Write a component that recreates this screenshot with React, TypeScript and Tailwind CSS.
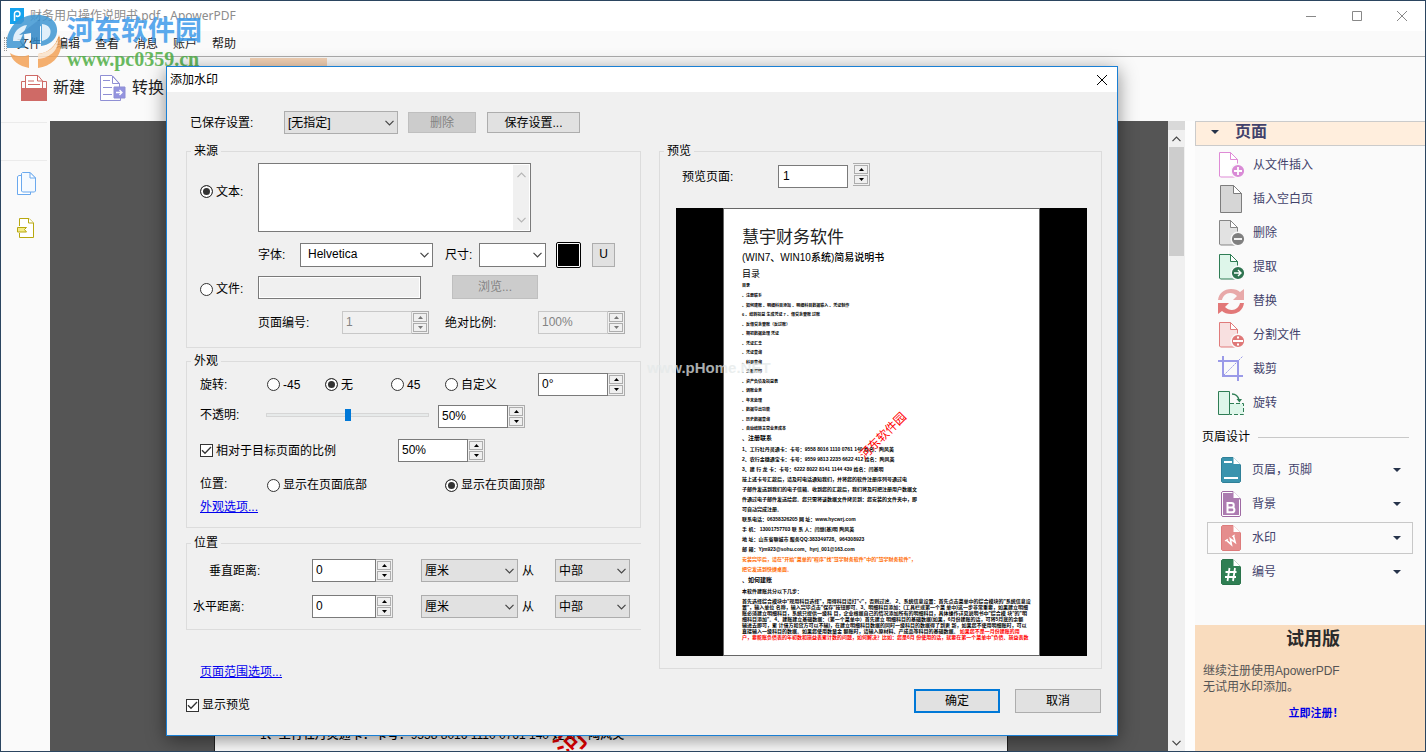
import { useState } from "react";
import type { ReactNode } from "react";

const menuItems = ["文件", "编辑", "查看", "消息", "账户", "帮助"];

const contents = [
    "、注册联系",
    "、如何建账 、明细科目添加 、明细科目数据输入 、凭证制作",
    "6 、结转损益 生成凭证 7 、借贷余登账 过账",
    "、反借贷余登账（反过账）",
    "、期初数据处理 凭证",
    "、凭证汇总",
    "、凭证查询",
    "、科目查询",
    "、总账打印",
    "、资产负债及损益表",
    "、调账业务",
    "、年末处理",
    "、数据导出功能",
    "、历史数据查询",
    "、自动结转主营业务成本",
];

const accountLine = "1、工行牡丹灵通卡：卡号：9558 8016 1110 0761 140 姓名：陶风英";

const registerLines = [
    accountLine,
    "2、农行金穗通宝卡：卡号：9559 9813 2235 6622 412 姓名：陶风英",
    "3、建 行 龙 卡：卡号：6222 8022 8141 1144 439 姓名：闫基明",
    "按上述卡号汇款后，请及时电话通知我们，并将您的软件注册序列号通过电",
    "子邮件发送到我们的电子信箱。收到您的汇款后，我们将及时把注册用户数据文",
    "件通过电子邮件发送给您。您只需将该数据文件拷贝到：您安装的文件夹中，即",
    "可自动完成注册。",
    "联系电话：06358326205 网 址：www.hycwrj.com",
    "手 机： 13001757703 联 系 人：闫继(基)明 陶风英",
    "地 址：山东省聊城市 服务QQ:383349728、964308923",
    "邮 箱：Yjm923@sohu.com、hyrj_001@163.com",
];

const stepLines = [
    '首先选择综合模块中"现用科目选择"，用得科目请打"√"，否则过滤。 2、系统信息设置：首先点击菜单中的综合模块的"系统信息设',
    '置"，输入单位 名称，输入完毕点击"保存"按钮即可。3、明细科目添加：(工具栏或第一个菜 单中)这一步非常重要，如果建立明细',
    '账必须建立明细科目，系统只提供一级科 目，企业根据自己的情况添加所有的明细科目，具体操作详见说明书中"综合模 块"的"明',
    '细科目添加"。4、建账建立基础数据：（第一个菜单中）首先建立 明细科目的基础数据(如果，6月份建账的话，可将5月底的余额',
    "输进去即可，累 计借方和贷方可以不输)，在建立明细科目数据的同时一级科目的数据得了到更 新，如果您不使用明细账时，可以",
];

function Chevron({ className = "" }: { className?: string }) {
    return (
        <svg viewBox="0 0 9 6" className={`h-1.5 w-[9px] ${className}`} fill="none" stroke="currentColor">
            <path d="M.5.8l4 4 4-4" strokeWidth="1.2" />
        </svg>
    );
}

function Triangle({ up = false }: { up?: boolean }) {
    return (
        <svg viewBox="0 0 5 3" className="h-[3px] w-[5px]" fill="currentColor">
            <path d={up ? "M0 3h5L2.5 0z" : "M0 0h5L2.5 3z"} />
        </svg>
    );
}

function Select({ id, options, className, white = false, label }: { id: string; options: string[]; className: string; white?: boolean; label?: string }) {
    return (
        <span className={`grid items-center ${className}`}>
            <select
                id={id}
                aria-label={label}
                className={`h-full w-full appearance-none border text-black [grid-area:1/1] ${white ? "border-[#7a7a7a] bg-white pb-0.5 pl-[7px]" : "border-[#adadad] bg-[#e1e1e1] pl-[3px]"}`}
            >
                {options.map((option) => <option key={option}>{option}</option>)}
            </select>
            <Chevron className="pointer-events-none mr-1 justify-self-end text-[#444] [grid-area:1/1]" />
        </span>
    );
}

function Arrows({ disabled = false, name }: { disabled?: boolean; name: string }) {
    const button = "flex flex-1 items-center justify-center border border-[#adadad] bg-[#f0f0f0]";
    return (
        <span className={`flex h-[23px] w-[17px] flex-col gap-px border-y border-r border-[#adadad] bg-[#f0f0f0] p-px ${disabled ? "text-[#777]" : "text-black"}`}>
            <button type="button" disabled={disabled} aria-label={`${name}增加`} className={button}><Triangle up /></button>
            <button type="button" disabled={disabled} aria-label={`${name}减少`} className={button}><Triangle /></button>
        </span>
    );
}

function Spin({ id, value, name, className = "w-[87px]", disabled = false }: { id: string; value: string; name: string; className?: string; disabled?: boolean }) {
    return (
        <span className={`flex h-[23px] ${className}`}>
            <input
                id={id}
                type="text"
                aria-label={name}
                defaultValue={value}
                disabled={disabled}
                className={`h-full min-w-0 flex-1 border pb-0.5 pl-[3px] ${disabled ? "border-[#c8c8c8] bg-[#f0f0f0] text-[#838383]" : "border-[#7a7a7a] bg-white text-black"}`}
            />
            <Arrows disabled={disabled} name={name} />
        </span>
    );
}

function Radio({ name, label, checked = false, className = "" }: { name: string; label: string; checked?: boolean; className?: string }) {
    return (
        <label className={`flex items-center gap-[3px] ${className}`}>
            <input
                type="radio"
                name={name}
                defaultChecked={checked}
                className="size-[13px] shrink-0 appearance-none rounded-full border border-[#333] bg-white checked:bg-[#333] checked:shadow-[inset_0_0_0_2px_#fff]"
            />
            {label}
        </label>
    );
}

function Check({ label, checked, onChange, className = "" }: { label: string; checked: boolean; onChange: (v: boolean) => void; className?: string }) {
    return (
        <label className={`flex items-center gap-[3px] ${className}`}>
            <span className="grid place-items-center">
                <input
                    type="checkbox"
                    checked={checked}
                    onChange={(e) => onChange(e.target.checked)}
                    className="size-[13px] appearance-none border border-[#333] bg-white [grid-area:1/1]"
                />
                {checked && (
                    <svg viewBox="0 0 11 11" className="pointer-events-none size-[11px] [grid-area:1/1]" fill="none" stroke="#333" strokeWidth="1.3">
                        <path d="M1 5.2l3 3L10 2" />
                    </svg>
                )}
            </span>
            {label}
        </label>
    );
}

function Group({ title, className, bodyClass, children }: { title: string; className: string; bodyClass: string; children: ReactNode }) {
    return (
        <fieldset className={`min-w-0 border border-[#dcdcdc] ${className}`}>
            <legend className="ml-1 px-[3px] leading-4">{title}</legend>
            <div className={bodyClass}>{children}</div>
        </fieldset>
    );
}

/* page outline shared by the panel icons */
function Sheet({ stroke, fill, children }: { stroke: string; fill: string; children?: ReactNode }) {
    return (
        <svg viewBox="0 0 28 28" className="size-7" fill="none">
            <path d="M2.5 1.5h11l7 7v17.5h-17l-1-1z" fill={fill} stroke={stroke} />
            <path d="M13.5 1.5v7h7z" fill="#fff" stroke={stroke} />
            {children}
        </svg>
    );
}

function Badge({ color, children }: { color: string; children: ReactNode }) {
    return (
        <>
            <circle cx="21" cy="20" r="6.8" fill={color} stroke="#fafafa" strokeWidth="1.4" />
            <g stroke="#fff" strokeWidth="1.8">{children}</g>
        </>
    );
}

const pageActions: { label: string; icon: ReactNode }[] = [
    {
        label: "从文件插入",
        icon: <Sheet stroke="#df8bd6" fill="#fff"><Badge color="#d98bd6"><path d="M17 20h8M21 16v8" /></Badge></Sheet>,
    },
    {
        label: "插入空白页",
        icon: (
            <svg viewBox="0 0 28 28" className="size-7" fill="none" stroke="#7d7d7d">
                <path d="M3.5.5h13l8 8V27.5h-21z" fill="#d6d6d6" />
                <path d="M16.5.5v8h8z" fill="#fff" />
            </svg>
        ),
    },
    {
        label: "删除",
        icon: <Sheet stroke="#858585" fill="#e2e2e2"><Badge color="#808080"><path d="M17 20h8" /></Badge></Sheet>,
    },
    {
        label: "提取",
        icon: (
            <Sheet stroke="#2f7d55" fill="#def6ea">
                <Badge color="#2f7450"><path d="M17 20h7M21 17l3 3-3 3" strokeWidth="1.4" /></Badge>
            </Sheet>
        ),
    },
    {
        label: "替换",
        icon: (
            <svg viewBox="0 0 28 28" className="size-7">
                <path d="M1 13C2 6 7 2 14 2c4 0 7 1 9 3l4-3v11H16l4-4c-2-2-4-3-7-3-4 0-7 3-8 7z" fill="#e8a9a9" />
                <path d="M27 16c-1 7-6 11-13 11-4 0-7-1-9-3l-4 3V16h11l-4 4c2 2 4 3 7 3 4 0 7-3 8-7z" fill="#e27878" />
            </svg>
        ),
    },
    {
        label: "分割文件",
        icon: (
            <Sheet stroke="#e07b7b" fill="#f8e0e0">
                <Badge color="#df7777"><path d="M16 20h10M20 16.500h2M20 23.500h2" /></Badge>
            </Sheet>
        ),
    },
    {
        label: "裁剪",
        icon: (
            <svg viewBox="0 0 28 28" className="size-7" fill="none" stroke="#9a9ae8">
                <path d="M6 1v20h20M1 6h20v20" strokeWidth="2" />
                <path d="M7 20L26 1" strokeDasharray="2 1" />
            </svg>
        ),
    },
    {
        label: "旋转",
        icon: (
            <svg viewBox="0 0 28 28" className="size-7" fill="none" stroke="#2f7d55">
                <path d="M1.5 2.500h11v23h-11z" fill="#def6ea" />
                <path d="M13 14.500h13.500v11H13" fill="#def6ea" strokeDasharray="4 2" />
                <path d="M15 5c4 0 6 2 7 6" strokeWidth="1.4" />
                <path d="M19.500 10h5.500l-2.500 3.500z" fill="#2f7d55" stroke="none" />
            </svg>
        ),
    },
];

function DesignIcon({ fill, edge, children }: { fill: string; edge: string; children: ReactNode }) {
    return (
        <svg viewBox="0 0 20 26" className="h-[26px] w-5" fill="none">
            <path d="M.5 1.500l1-1H12l7.500 7.500v16.500l-1 1h-17l-1-1z" fill={fill} stroke={edge} />
            {children}
            <path d="M12.500.5V7h6.500z" fill="#fff" />
        </svg>
    );
}

const designActions: { label: string; icon: ReactNode }[] = [
    {
        label: "页眉，页脚",
        icon: <DesignIcon fill="#3a93ad" edge="#2f7f97"><path d="M3 5h8M3 21h14" stroke="#fff" strokeWidth="2" /></DesignIcon>,
    },
    {
        label: "背景",
        icon: (
            <DesignIcon fill="#ac7bb0" edge="#9e6aa3">
                <path d="M1.500 24.500V1.500h10M18.500 8.500v16h-17" stroke="#fff" />
                <path d="M6.500 12h4a2.200 2.200 0 010 4.500h-4zM6.500 16.500H11a2.400 2.400 0 010 4.800H6.500z" stroke="#fff" strokeWidth="2" />
            </DesignIcon>
        ),
    },
    {
        label: "水印",
        icon: (
            <DesignIcon fill="#e58d8d" edge="#dd7b7b">
                <g transform="translate(4 16) rotate(-32)" stroke="#fff">
                    <path d="M1.500 0l2 6.500 2.200-5.500 2.200 5.500L10 0" strokeWidth="1.6" />
                    <path d="M0 0h3.500M8.300 0h3.200" />
                </g>
            </DesignIcon>
        ),
    },
    {
        label: "编号",
        icon: <DesignIcon fill="#2f7f53" edge="#2a734b"><path d="M8.500 9L6.500 22M14 9l-2 13M4.500 13h11M4 18h11" stroke="#fff" strokeWidth="1.8" /></DesignIcon>,
    },
];

function Header() {
    return (
        <header className="relative">
            <div className="flex h-[30px] items-center bg-white pl-[9px]">
                <svg viewBox="0 0 14 16" className="h-4 w-3.5">
                    <path d="M0 0h14v13l-3 3H0z" fill="#14a3ee" />
                    <path d="M4.500 13V5.500C4.500 2.500 10 2.500 10 6c0 2.500-3 3-4 1.500" fill="none" stroke="#fff" strokeWidth="1.5" />
                </svg>
                <h1 className="ml-1.5 flex-1 font-['Noto_Sans','Noto_Sans_CJK_SC',sans-serif] text-[#8c8c8c]">财务用户操作说明书.pdf - ApowerPDF</h1>
                <button type="button" aria-label="最小化" className="flex h-full w-[46px] items-center justify-center text-[#888]">
                    <svg viewBox="0 0 10 10" className="size-2.5" stroke="currentColor"><path d="M0 5.500h10" /></svg>
                </button>
                <button type="button" aria-label="最大化" className="flex h-full w-[45px] items-center justify-center text-[#888]">
                    <svg viewBox="0 0 10 10" className="size-2.5" fill="none" stroke="currentColor"><path d="M.5.5h9v9h-9z" /></svg>
                </button>
                <button type="button" aria-label="关闭" className="flex h-full w-[46px] items-center justify-center text-[#888]">
                    <svg viewBox="0 0 10 10" className="size-2.5" stroke="currentColor"><path d="M0 0l10 10M10 0L0 10" /></svg>
                </button>
            </div>
            <nav className="flex h-[26px] items-center gap-[15px] border-b border-[#acacac] bg-[#fafafa] pl-[3px]">
                <span className="-mr-[5px] h-3.5 w-[3px] border-x border-dotted border-[#999]" />
                {menuItems.map((item) => (
                    <button key={item} type="button" className="text-[#222]">{item}</button>
                ))}
            </nav>
            <div className="h-16 bg-[#fafafa] pt-px">
                <div className="ml-[249px] h-2 w-[77px] bg-[#f5d3b6]" />
                <div className="flex items-start gap-[15px] pt-[9px] pl-5 text-base leading-[26px] text-[#222]">
                    <button type="button" className="flex items-center gap-1.5">
                        <svg viewBox="0 0 26 26" className="size-[26px]" fill="none" stroke="#cf6a66">
                            <path d="M.5 14V6.500H4M21 6.500h4.500V14" />
                            <path d="M4.500 13V.5H17l4.500 5.500v7" fill="#fff" />
                            <path d="M16.500.5V6h5M7 6h6M7 9.500h12" />
                            <path d="M0 13h26v13H0z" fill="#cf6a66" stroke="none" />
                        </svg>
                        新建
                    </button>
                    <button type="button" className="flex items-center gap-1.5">
                        <svg viewBox="0 0 26 26" className="size-[26px]" fill="none" stroke="#8f8fd4">
                            <path d="M13 25.500H.5V.5H12L19.500 9v3" fill="#fff" />
                            <path d="M12.500 1v7.500h7zM3 5.500h7M3 12.500h9M3 19.500h9M13 25.500h7.500V23" />
                            <path d="M14 12h11v11H14z" fill="#9494df" />
                            <path d="M16 17.500h6M19.500 15l2.500 2.500-2.500 2.500" stroke="#fff" strokeWidth="1.3" />
                        </svg>
                        转换
                    </button>
                </div>
            </div>
            {/* site stamp lying over the title and the menu */}
            <div className="pointer-events-none absolute top-[10px] left-1 flex items-start gap-1 whitespace-nowrap opacity-85">
                <svg viewBox="0 0 58 58" className="size-[58px]" fill="none">
                    <path d="M2 37C-1 18 15 1 36 4c12 2 17 9 16 17-1 9-9 13-16 14V15l-17 8 1 14H2z" fill="#3f97d3" />
                    <path d="M8 30c0-9 6-15 14-16l-7 16zM37 13c7 1 10 5 8 11-1 3-4 5-8 6z" fill="#dceefa" />
                    <path d="M14 24l21-16v25h-9V22z" fill="#2f86c6" />
                    <path d="M5 42c6 4 13 4 19 2v13h9V43c10-1 18-8 21-19 7 17-5 31-21 33h-9C14 55 7 50 5 42z" fill="#f3a257" />
                    <path d="M33 43c10-1 17-7 20-15 1 10-7 19-20 20z" fill="#fbe3cb" />
                </svg>
                <div>
                    <p className="text-[27px] leading-10 font-bold text-[#3f9bea]">河东软件园</p>
                    <p className="font-['Liberation_Serif',serif] text-xl leading-4 font-bold text-[#4fae45]">www.pc0359.cn</p>
                </div>
            </div>
        </header>
    );
}

function LeftBar() {
    return (
        <aside className="flex w-[49px] flex-col items-start bg-[#fafafa]">
            <div className="mt-px h-[39px] w-[46px] border-y border-[#ebebeb]" />
            <button type="button" aria-label="页面缩略图" className="mt-[11px] ml-4">
                <svg viewBox="0 0 20 24" className="h-6 w-5" fill="#fff" stroke="#6aa9ee">
                    <path d="M4 3.500H2l-1.500 1v18h13v-3" />
                    <path d="M4.500 1.500l1-1H13L18.500 6v13l-1 1h-12l-1-1z" fill="#f5faff" />
                    <path d="M13 .5V6h5.500z" />
                </svg>
            </button>
            <button type="button" aria-label="书签" className="mt-[22px] ml-4">
                <svg viewBox="0 0 18 20" className="h-5 w-[18px]" fill="#fff" stroke="#b8a80f">
                    <path d="M2.500 8V.5H12l4.500 4.500v14.500h-14V15" />
                    <path d="M11.500.5V5h5" />
                    <path d="M.5 9.500h9l-2 2 2 2.500h-9z" fill="#f3eb8a" />
                </svg>
            </button>
        </aside>
    );
}

function Viewer() {
    return (
        <main className="flex min-w-0 flex-1 bg-[#555]">
            <div className="flex flex-1 overflow-hidden pr-40 pl-[164px]">
                <div className="flex flex-1 flex-col justify-end overflow-hidden border-x border-[#222] bg-white pl-[45px]">
                    <div className="relative h-[26px] leading-5 font-medium whitespace-nowrap text-black">
                        {accountLine}
                        <span className="absolute top-0.5 left-[296px] -rotate-45 text-[30px] leading-8 text-[#e60000]">河</span>
                    </div>
                </div>
            </div>
            <div className="flex w-[17px] flex-col items-center bg-[#f0f0f0]">
                <div className="h-[9px] w-full bg-[#d9d9d9]" />
                <button type="button" aria-label="向上滚动" className="flex h-[17px] items-center"><Chevron className="rotate-180 text-[#444]" /></button>
                <div className="h-[109px] w-[15px] bg-[#cdcdcd]" />
                <button type="button" aria-label="向下滚动" className="mt-auto flex h-[17px] items-center"><Chevron className="text-[#444]" /></button>
            </div>
        </main>
    );
}

function ToolPanel() {
    const caret = <svg viewBox="0 0 8 4" className="h-1 w-2" fill="#26334a"><path d="M0 0h8L4 4z" /></svg>;
    return (
        <aside className="ml-2.5 flex w-[230px] shrink-0 flex-col bg-[#fafafa] text-[#42426b]">
            <h2 className="flex h-[25px] items-center gap-4 border-y border-l border-[#cbcbcb] bg-[#ffeedd] pb-1 pl-[15px] text-base leading-5 font-bold">
                {caret}
                页面
            </h2>
            <ul className="pt-0.5">
                {pageActions.map(({ label, icon }) => (
                    <li key={label}>
                        <button type="button" className="flex h-[34px] w-full items-center gap-2 pl-[22px]">{icon}{label}</button>
                    </li>
                ))}
            </ul>
            <h3 className="mt-[9px] flex h-4 items-center gap-2 pr-4 pl-[7px] text-black">
                页眉设计
                <span className="h-px flex-1 bg-[#c8c8c8]" />
            </h3>
            <ul className="mt-2 px-3">
                {designActions.map(({ label, icon }) => (
                    <li key={label} className="py-px">
                        <button
                            type="button"
                            className={`flex h-8 w-full items-center gap-[11px] border pr-[11px] pl-[13px] text-left ${label === "水印" ? "border-[#c8c8c8]" : "border-transparent"}`}
                        >
                            {icon}
                            <span className="flex-1">{label}</span>
                            {caret}
                        </button>
                    </li>
                ))}
            </ul>
            <section className="mt-auto flex h-[126px] flex-col bg-[#f9dcbe] pt-1">
                <h2 className="pl-1.5 text-center text-lg leading-5 font-bold text-[#2b2b2b]">试用版</h2>
                <p className="mt-[14px] pl-2 text-[#555]">继续注册使用ApowerPDF<br />无试用水印添加。</p>
                <a href="#register" className="mt-2.5 pl-3 text-center text-[11px] font-bold text-[#0000e6]">立即注册！</a>
            </section>
        </aside>
    );
}

function Preview() {
    return (
        <div className="relative mt-5 h-[448px] bg-black px-[47px]">
            <article className="h-full overflow-hidden border border-[#666] bg-white pt-[19px] pl-[18px] text-[5px] leading-[10px] font-bold whitespace-nowrap text-black">
                <h3 className="text-[17px] leading-5 font-normal text-[#222]">慧宇财务软件</h3>
                <h4 className="text-[10px] leading-5 font-medium">(WIN7、WIN10系统)简易说明书</h4>
                <h4 className="text-[9px] leading-3 font-normal">目录</h4>
                <p className="mt-px text-[4px]">目录</p>
                <ul className="flex h-[142px] flex-col justify-between text-[4px] leading-[9px]">
                    {contents.map((line) => <li key={line}>{line}</li>)}
                </ul>
                <h4 className="text-[6px] leading-[11px]">、注册联系</h4>
                {registerLines.map((line) => <p key={line}>{line}</p>)}
                <p className="text-[#ff6a00]">安装完毕后，请在"开始"菜单的"程序"找"慧宇财务软件"中的"慧宇财务软件"，</p>
                <p className="text-[#ff6a00]">把它发送到快捷桌面。</p>
                <h4 className="text-[6px] leading-3">、如何建账</h4>
                <p>本软件建账共分以下几步：</p>
                <div className="mt-0.5 leading-[6px]">
                    {stepLines.map((line) => <p key={line}>{line}</p>)}
                    <p>直接输入一级科目的数据。如果您使用数量金 额账时，请输入原材料、产成品等科目的基础数据。<span className="text-[#f00]"> 如果您不是一月份建账的用</span></p>
                    <p className="text-[#f00]">户，要能账负债表的年初数和损益表累计数的问题，如何解决？比如：您是6月 份使用的话，就要在第一个菜单中"负债、损益表数</p>
                </div>
            </article>
            <span className="absolute top-[220px] left-[177px] -rotate-45 text-xs leading-4 whitespace-nowrap text-[#f00]">河东软件园</span>
            <span className="pointer-events-none absolute top-[148px] -left-[29px] text-[15px] leading-6 font-bold whitespace-nowrap text-[#e4e9e9]/75">www.pHome.NET</span>
        </div>
    );
}

function DistanceRow({ id, label, indent, className }: { id: string; label: string; indent: string; className: string }) {
    return (
        <div className={`flex items-center ${className}`}>
            <label htmlFor={id} className={`w-[125px] ${indent}`}>{label}</label>
            <Spin id={id} name={label} value="0" className="w-[81px]" />
            <Select id={`${id}-unit`} label="单位" options={["厘米", "英寸"]} className="ml-7 h-[23px] w-[97px]" />
            <label htmlFor={`${id}-from`} className="w-[37px] pl-1">从</label>
            <Select id={`${id}-from`} options={["中部", "顶部", "底部"]} className="h-[23px] w-[75px]" />
        </div>
    );
}

function WatermarkDialog() {
    const [relative, setRelative] = useState(true);
    const [showPreview, setShowPreview] = useState(true);
    const [opacity, setOpacity] = useState(50);

    return (
        <div
            role="dialog"
            aria-label="添加水印"
            className="absolute top-[65px] left-[165px] w-[952px] border border-[#1a7fd4] bg-[#f0f0f0] text-black shadow-[0_4px_18px_rgba(0,0,0,0.45)]"
        >
            <div className="flex h-[25px] items-center justify-between bg-white pr-[5px] pl-[3px]">
                <h2>添加水印</h2>
                <button type="button" aria-label="关闭" className="flex size-5 items-center justify-center">
                    <svg viewBox="0 0 10 10" className="size-2.5 shrink-0" stroke="#000"><path d="M0 0l10 10M10 0L0 10" /></svg>
                </button>
            </div>

            <form className="pt-[19px] pr-[15px] pb-[22px] pl-[19px]" onSubmit={(e) => e.preventDefault()}>
                <div className="flex items-center">
                    <label htmlFor="saved" className="w-[98px] pl-1">已保存设置:</label>
                    <Select id="saved" options={["[无指定]"]} className="h-[23px] w-[114px]" />
                    <button type="button" disabled className="ml-2.5 h-[21px] w-[68px] border border-[#bfbfbf] bg-[#ccc] text-[#838383]">删除</button>
                    <button type="button" className="ml-[11px] h-[21px] w-[93px] border border-[#adadad] bg-[#e1e1e1]">保存设置...</button>
                </div>

                <div className="mt-[9px] flex items-start gap-[18px]">
                    <div className="w-[455px]">
                        <Group title="来源" className="" bodyClass="pt-1 pb-[13px] pl-[13px]">
                            <div className="flex items-center">
                                <Radio name="source" label="文本:" checked className="w-[58px] pb-3" />
                                <span className="grid w-[273px]">
                                    <textarea aria-label="水印文本" className="h-[69px] w-full resize-none border border-[#7a7a7a] bg-white p-1 pr-5 [grid-area:1/1]" />
                                    <span className="my-0.5 mr-0.5 flex w-4 flex-col items-center justify-between justify-self-end bg-[#f0f0f0] py-[7px] text-[#b5b5b5] [grid-area:1/1]">
                                        <Chevron className="rotate-180" />
                                        <Chevron />
                                    </span>
                                </span>
                            </div>
                            <div className="mt-2.5 flex h-[26px] items-center pl-[58px]">
                                <label htmlFor="font" className="w-[42px]">字体:</label>
                                <Select id="font" white options={["Helvetica"]} className="h-6 w-[133px]" />
                                <label htmlFor="size" className="w-[46px] pl-3">尺寸:</label>
                                <Select id="size" white options={[""]} className="h-6 w-[67px]" />
                                <button type="button" aria-label="颜色" className="ml-2.5 h-[26px] w-[25px] rounded-xs border border-black bg-white p-px">
                                    <span className="block h-full bg-black" />
                                </button>
                                <button type="button" aria-label="下划线" className="ml-[11px] h-6 w-[23px] border border-[#adadad] bg-[#e1e1e1] pb-0.5">U</button>
                            </div>
                            <div className="mt-[7px] flex h-6 items-center">
                                <Radio name="source" label="文件:" className="w-[58px] pt-1" />
                                <input type="text" disabled aria-label="文件路径" className="h-[23px] w-[163px] border border-[#7a7a7a] bg-[#f0f0f0] shadow-[inset_0_0_0_1px_#fff]" />
                                <button type="button" disabled className="ml-[31px] h-6 w-[86px] border border-[#bfbfbf] bg-[#ccc] text-[#838383]">浏览...</button>
                            </div>
                            <div className="mt-3 flex items-center pl-[58px]">
                                <label htmlFor="page-no" className="w-[84px]">页面编号:</label>
                                <Spin id="page-no" name="页面编号" value="1" disabled />
                                <label htmlFor="scale" className="w-[109px] pl-4">绝对比例:</label>
                                <Spin id="scale" name="绝对比例" value="100%" disabled />
                            </div>
                        </Group>

                        <Group title="外观" className="mt-[5px]" bodyClass="pt-1 pb-3 pl-[13px]">
                            <div className="flex items-center">
                                <span className="w-[67px]">旋转:</span>
                                <Radio name="rotate" label="-45" className="w-[58px]" />
                                <Radio name="rotate" label="无" checked className="w-[66px]" />
                                <Radio name="rotate" label="45" className="w-[54px]" />
                                <Radio name="rotate" label="自定义" className="w-[93px] -order-none" />
                                <Spin id="angle" name="角度" value="0°" className="w-[87px]" />
                            </div>
                            <div className="mt-[9px] flex items-center">
                                <label htmlFor="opacity" className="w-[66px] pb-1">不透明:</label>
                                <input
                                    id="opacity"
                                    type="range"
                                    value={opacity}
                                    onChange={(e) => setOpacity(Number(e.target.value))}
                                    className="mb-1 h-3 w-[163px] appearance-none bg-transparent [&::-webkit-slider-runnable-track]:h-1 [&::-webkit-slider-runnable-track]:border [&::-webkit-slider-runnable-track]:border-[#d6d6d6] [&::-webkit-slider-runnable-track]:bg-[#e7eaea] [&::-webkit-slider-thumb]:-mt-[5px] [&::-webkit-slider-thumb]:h-3 [&::-webkit-slider-thumb]:w-1.5 [&::-webkit-slider-thumb]:appearance-none [&::-webkit-slider-thumb]:bg-[#0078d7]"
                                />
                                <span className="ml-[9px]"><Spin id="opacity-value" name="不透明度" value="50%" /></span>
                            </div>
                            <div className="mt-[11px] flex items-center">
                                <Check label="相对于目标页面的比例" checked={relative} onChange={setRelative} className="w-[198px]" />
                                <Spin id="ratio" name="页面比例" value="50%" />
                            </div>
                            <div className="mt-[15px] flex h-4 items-center">
                                <span className="w-[67px] pb-0.5">位置:</span>
                                <Radio name="layer" label="显示在页面底部" className="w-[178px]" />
                                <Radio name="layer" label="显示在页面顶部" checked />
                            </div>
                            <a href="#appearance" className="mt-1.5 block w-fit text-[#0000ee] underline">外观选项...</a>
                        </Group>

                        <Group title="位置" className="mt-[7px] border-r-0" bodyClass="pt-2 pb-[11px]">
                            <DistanceRow id="vertical" label="垂直距离:" indent="pl-[22px]" className="" />
                            <DistanceRow id="horizontal" label="水平距离:" indent="pl-1.5" className="mt-[13px]" />
                        </Group>

                        <a href="#range" className="mt-[34px] ml-[14px] block w-fit text-[#0000ee] underline">页面范围选项...</a>
                    </div>

                    <Group title="预览" className="flex-1" bodyClass="pt-1 pr-[14px] pb-3 pl-4">
                        <div className="flex items-start">
                            <label htmlFor="preview-page" className="w-[102px] pt-1.5 pl-1.5">预览页面:</label>
                            <input id="preview-page" type="text" defaultValue="1" className="mt-0.5 h-[23px] w-[70px] border border-[#7a7a7a] bg-white pb-0.5 pl-1" />
                            <span className="ml-[5px]"><Arrows name="预览页面" /></span>
                        </div>
                        <Preview />
                    </Group>
                </div>

                <div className="mt-[9px] flex items-center">
                    <Check label="显示预览" checked={showPreview} onChange={setShowPreview} className="mr-auto pt-2" />
                    <button type="submit" className="h-6 w-[86px] border-2 border-[#0078d7] bg-[#e1e1e1]">确定</button>
                    <button type="button" className="mr-px ml-[15px] h-6 w-[86px] border border-[#adadad] bg-[#e1e1e1]">取消</button>
                </div>
            </form>
        </div>
    );
}

export default function App() {
    return (
        <div className="relative flex h-screen w-full flex-col overflow-hidden border border-[#2b4560] bg-[#fdfdfd] font-['Liberation_Sans','Noto_Sans_CJK_SC',sans-serif] text-xs leading-4">
            <Header />
            <div className="flex min-h-0 flex-1">
                <LeftBar />
                <Viewer />
                <ToolPanel />
            </div>
            <WatermarkDialog />
        </div>
    );
}
